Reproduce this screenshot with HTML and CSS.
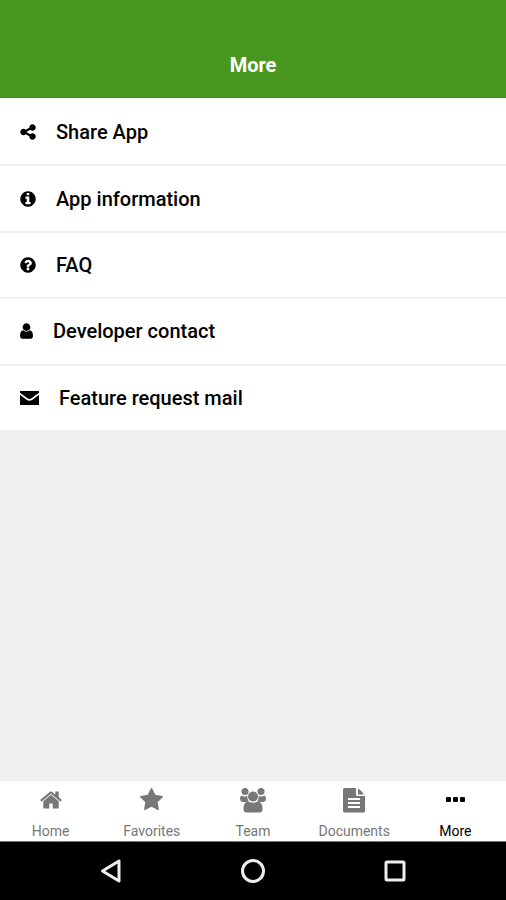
FILE: index.html
```html
<!DOCTYPE html>
<html lang="en">
<head>
<meta charset="utf-8">
<meta name="viewport" content="width=device-width, initial-scale=1">
<title>More</title>
<link rel="stylesheet" href="styles.css">
</head>
<body>
<header class="header"><h1 class="title">More</h1></header>
<main class="content">
  <ul class="menu">
    <li class="menu-row"><a class="menu-link" href="#share">
      <svg class="icon" viewBox="128 0 1536 1792" width="16" height="18" aria-hidden="true"><path d="M1344 1024q133 0 226.500 93.500t93.500 226.500-93.500 226.500-226.500 93.500-226.500-93.500-93.500-226.500q0-12 2-34l-360-180q-92 86-218 86-133 0-226.500-93.500t-93.500-226.500 93.500-226.500 226.500-93.500q126 0 218 86l360-180q-2-22-2-34 0-133 93.500-226.500t226.500-93.500 226.500 93.500 93.500 226.500-93.500 226.500-226.500 93.500q-126 0-218-86l-360 180q2 22 2 34t-2 34l360 180q92-86 218-86z"/></svg>
      <span>Share App</span></a></li>
    <li class="menu-row"><a class="menu-link" href="#info">
      <svg class="icon" viewBox="128 0 1536 1792" width="16" height="18" aria-hidden="true"><path d="M1152 1376v-160q0-14-9-23t-23-9h-96v-512q0-14-9-23t-23-9h-320q-14 0-23 9t-9 23v160q0 14 9 23t23 9h96v320h-96q-14 0-23 9t-9 23v160q0 14 9 23t23 9h448q14 0 23-9t9-23zm-128-896v-160q0-14-9-23t-23-9h-192q-14 0-23 9t-9 23v160q0 14 9 23t23 9h192q14 0 23-9t9-23zm640 416q0 209-103 385.500t-279.500 279.500-385.500 103-385.500-103-279.500-279.500-103-385.500 103-385.500 279.500-279.500 385.500-103 385.500 103 279.500 279.500 103 385.500z"/></svg>
      <span>App information</span></a></li>
    <li class="menu-row"><a class="menu-link" href="#faq">
      <svg class="icon" viewBox="128 0 1536 1792" width="16" height="18" aria-hidden="true"><path d="M1024 1376v-192q0-14-9-23t-23-9h-192q-14 0-23 9t-9 23v192q0 14 9 23t23 9h192q14 0 23-9t9-23zm256-672q0-88-55.500-163t-138.500-116-170-41q-243 0-371 213-15 24 8 42l132 100q7 6 19 6 16 0 25-12 53-68 86-92 34-24 86-24 48 0 85.500 26t37.500 59q0 38-20 61t-68 45q-63 28-115.500 86.500t-52.500 125.500v36q0 14 9 23t23 9h192q14 0 23-9t9-23q0-19 21.500-49.500t54.500-49.500q32-18 49-28.500t46-35 44.500-48 28-60.500 12.500-81zm384 192q0 209-103 385.500t-279.500 279.500-385.500 103-385.500-103-279.500-279.500-103-385.500 103-385.500 279.500-279.500 385.500-103 385.500 103 279.500 279.500 103 385.500z"/></svg>
      <span>FAQ</span></a></li>
    <li class="menu-row"><a class="menu-link" href="#developer">
      <svg class="icon" viewBox="256 0 1280 1792" width="13" height="18" aria-hidden="true"><path d="M1536 1399q0 109-62.500 187t-150.500 78h-854q-88 0-150.500-78t-62.500-187q0-85 8.500-160.500t31.500-152 58.500-131 94-89 134.500-34.500q131 128 313 128t313-128q76 0 134.500 34.500t94 89 58.500 131 31.500 152 8.500 160.500zm-256-887q0 159-112.500 271.500t-271.500 112.500-271.500-112.500-112.500-271.500 112.500-271.500 271.500-112.500 271.500 112.500 112.500 271.500z"/></svg>
      <span>Developer contact</span></a></li>
    <li class="menu-row"><a class="menu-link" href="#feature">
      <svg class="icon" viewBox="0 0 19 18" width="19" height="18" aria-hidden="true"><path d="M0 2h19v1.800L11.500 9.300q-2 1.400-4 0L0 3.800zM0 5.800l6.500 5q3 2 6 0l6.500-5V16H0z"/></svg>
      <span>Feature request mail</span></a></li>
  </ul>
</main>
<nav class="tabs" aria-label="Sections">
  <a class="tab" href="#home">
    <svg class="tab-icon" viewBox="0 0 1792 1792" width="24" height="24" aria-hidden="true"><path d="M1472 992v480q0 26-19 45t-45 19h-384v-384h-256v384h-384q-26 0-45-19t-19-45v-480q0-1 .5-3t.5-3l575-474 575 474q1 2 1 6zm223-69l-62 74q-8 9-21 11h-3q-13 0-21-7l-692-577-692 577q-12 8-24 7-13-2-21-11l-62-74q-8-10-7-23.500t11-21.500l719-599q32-26 76-26t76 26l244 204v-195q0-14 9-23t23-9h192q14 0 23 9t9 23v408l219 182q10 8 11 21.500t-7 23.500z"/></svg>
    <span>Home</span></a>
  <a class="tab" href="#favorites">
    <svg class="tab-icon" viewBox="0 0 1792 1792" width="25" height="25" aria-hidden="true"><path d="M1728 647q0 22-26 48l-363 354 86 500q1 7 1 20 0 21-10.500 35.500t-30.500 14.500q-19 0-40-12l-449-236-449 236q-22 12-40 12-21 0-31.500-14.500t-10.500-35.500q0-6 2-20l86-500-364-354q-25-27-25-48 0-37 56-46l502-73 225-455q19-41 49-41t49 41l225 455 502 73q56 9 56 46z"/></svg>
    <span>Favorites</span></a>
  <a class="tab" href="#team">
    <svg class="tab-icon" viewBox="0 0 28 26" width="28" height="26" aria-hidden="true"><circle cx="6" cy="4.500" r="3.500"/><circle cx="22" cy="4.500" r="3.500"/><circle cx="14" cy="9.500" r="5"/><path d="M2.200 8.500q3.300 1.700 6 .5 0 3 1.500 5-1.200.5-2 .9H3.500Q1 14.500 1 12q0-2.500 1.200-3.500zM25.800 8.500q-3.300 1.700-6 .5 0 3-1.500 5 1.200.5 2 .9h4.200q2.500-.4 2.500-2.900 0-2.500-1.200-3.500zM9.500 14.500q4.500 2.500 9 0 5 0 5 7.500 0 3.500-3 3.500h-13q-3 0-3-3.500 0-7.500 5-7.500z"/></svg>
    <span>Team</span></a>
  <a class="tab" href="#documents">
    <svg class="tab-icon" viewBox="0 0 22 26" width="22" height="26" aria-hidden="true"><path fill-rule="evenodd" d="M1.500 1H13v6.500Q13 9 14.500 9H22v15q0 1.500-1.500 1.500h-19Q0 25.500 0 24V2.500Q0 1 1.500 1zM5 11v2h12v-2zm0 4v2h12v-2zm0 4v2h12v-2zM15 1.500q3 1.500 6 6h-6z"/></svg>
    <span>Documents</span></a>
  <a class="tab tab-active" href="#more" aria-current="page">
    <svg class="tab-icon" viewBox="0 0 19 24" width="19" height="24" aria-hidden="true"><rect x="0" y="9" width="5" height="5" rx="1"/><rect x="7" y="9" width="5" height="5" rx="1"/><rect x="14" y="9" width="5" height="5" rx="1"/></svg>
    <span>More</span></a>
</nav>
<footer class="system-bar">
  <button class="system-button" type="button" aria-label="Back"><svg viewBox="0 0 26 26" width="26" height="26"><path d="M21 3v20L4.500 13z"/></svg></button>
  <button class="system-button" type="button" aria-label="Home screen"><svg viewBox="0 0 26 26" width="26" height="26"><circle cx="13" cy="13" r="10.500"/></svg></button>
  <button class="system-button" type="button" aria-label="Recent apps"><svg viewBox="0 0 26 26" width="26" height="26"><rect x="4" y="4" width="18" height="18" rx="1"/></svg></button>
</footer>
</body>
</html>
```
FILE: styles.css
```css
* { box-sizing: border-box; }

body {
  display: flex;
  flex-direction: column;
  min-height: 100vh;
  margin: 0;
  background: #f0f0f0;
  color: #000;
  font-family: Roboto, "Liberation Sans", sans-serif;
}

.header {
  padding: 52px 16px 18px;
  border-bottom: 1px solid #3a8a14;
  background: #48971e;
  color: #fff;
  text-align: center;
}

.title {
  margin: 0;
  font-size: 20px;
  font-weight: 700;
  line-height: 27px;
}

.content { flex: 1; }

.menu {
  display: grid;
  grid-auto-rows: 1fr;
  min-height: 332px;
  margin: 0;
  padding: 0;
  background: #fff;
  list-style: none;
}

.menu-row {
  display: flex;
  border-top: 2px solid #f0f0f0;
}
.menu-row:first-child { border-color: #fff; }

.menu-link {
  display: flex;
  flex: 1;
  align-items: center;
  gap: 20px;
  padding: 0 20px;
  color: inherit;
  font-size: 20px;
  font-weight: 500;
  line-height: 24px;
  text-decoration: none;
}

.icon { fill: #000; }

.tabs {
  display: grid;
  grid-template-columns: repeat(5, 1fr);
  border-bottom: 1px solid #777;
  background: #fff;
}

.tab {
  display: flex;
  flex-direction: column;
  align-items: center;
  padding: 6px 0 2px;
  color: #777;
  font-size: 14px;
  line-height: 16px;
  text-decoration: none;
}

.tab-icon {
  height: 26px;
  margin-bottom: 10px;
  fill: currentColor;
}

.tab-active { color: #000; }

.system-bar {
  display: flex;
  justify-content: center;
  gap: 116px;
  padding: 16px 0;
  background: #000;
}

.system-button {
  display: flex;
  padding: 0;
  border: 0;
  background: none;
}

.system-button svg {
  fill: none;
  stroke: #eee;
  stroke-width: 3;
  stroke-linejoin: round;
}
```
